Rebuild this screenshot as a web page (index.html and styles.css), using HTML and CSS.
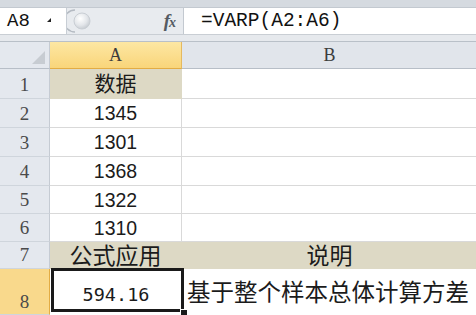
FILE: index.html
```html
<!DOCTYPE html>
<html lang="zh-CN">
<head>
    <meta charset="UTF-8">
    <title>VARP</title>
    <link rel="stylesheet" href="styles.css">
</head>
<body>
    <div class="chrome"></div>

    <div class="formula-bar">
        <div class="name-box">
            <span class="ref">A8</span>
            <span class="drop"></span>
        </div>
        <div class="bar-tools">
            <svg class="knob" width="26" height="26" viewBox="0 0 26 26">
                <defs>
                    <radialGradient id="kg" cx="0.4" cy="0.35" r="0.7">
                        <stop offset="0" stop-color="#ffffff"/>
                        <stop offset="0.6" stop-color="#e3e6ea"/>
                        <stop offset="1" stop-color="#c3c8ce"/>
                    </radialGradient>
                </defs>
                <path d="M8 2 A11 11 0 0 0 8 24" fill="none" stroke="#b4bac2" stroke-width="1.5"/>
                <circle cx="15" cy="13" r="8" fill="url(#kg)" stroke="#c9ced4"/>
            </svg>
            <span class="fx">f<small>x</small></span>
        </div>
        <div class="formula">=VARP(A2:A6)</div>
    </div>

    <div class="gap"></div>

    <div class="sheet">
        <div class="corner"><span></span></div>
        <div class="col-head active">A</div>
        <div class="col-head">B</div>

        <div class="row-head">1</div>
        <div class="cell tan">数据</div>
        <div class="cell"></div>

        <div class="row-head">2</div>
        <div class="cell">1345</div>
        <div class="cell"></div>

        <div class="row-head">3</div>
        <div class="cell">1301</div>
        <div class="cell"></div>

        <div class="row-head">4</div>
        <div class="cell">1368</div>
        <div class="cell"></div>

        <div class="row-head">5</div>
        <div class="cell">1322</div>
        <div class="cell"></div>

        <div class="row-head">6</div>
        <div class="cell">1310</div>
        <div class="cell"></div>

        <div class="row-head">7</div>
        <div class="cell tan big">公式应用</div>
        <div class="cell tan big">说明</div>

        <div class="row-head active tall">8</div>
        <div class="cell selected">594.16</div>
        <div class="cell note">基于整个样本总体计算方差</div>
    </div>
</body>
</html>
```

FILE: styles.css
```css
body {
    margin: 0;
    background: #e4e8ed;
    font-family: "Liberation Sans", "Noto Sans CJK SC", sans-serif;
    width: 476px;
    height: 315px;
    overflow: hidden;
}
.chrome {
    height: 7px;
    background: #d5dae0;
    border-bottom: 1px solid #c3c9d0;
}
.formula-bar {
    display: flex;
    height: 26px;
    background: #e8ebef;
}
.name-box {
    width: 66px;
    background: #fff;
    border-right: 1px solid #c8ced5;
    display: flex;
    align-items: center;
    position: relative;
}
.ref {
    font-family: "Liberation Mono", monospace;
    font-size: 19px;
    margin-left: 7px;
    color: #111;
}
.drop {
    width: 0;
    height: 0;
    border-left: 4px solid transparent;
    border-bottom: 4px solid #222;
    margin-left: 17px;
    margin-top: -2px;
}
.bar-tools {
    width: 116px;
    display: flex;
    align-items: center;
    border-right: 1px solid #c3c9d0;
}
.fx {
    margin-left: auto;
    margin-right: 8px;
    font-family: "Liberation Serif", serif;
    font-style: italic;
    font-weight: bold;
    font-size: 19px;
    color: #555b63;
    letter-spacing: -1px;
}
.fx small {
    font-size: 14px;
}
.formula {
    flex: 1;
    background: #fff;
    font-family: "Liberation Mono", monospace;
    font-size: 19.5px;
    line-height: 26px;
    padding-left: 17px;
    color: #111;
}
.gap {
    height: 8px;
    border-top: 1px solid #c9ced4;
    border-bottom: 1px solid #b9c0c8;
    background: #e6e9ed;
    box-sizing: border-box;
}
.sheet {
    display: grid;
    grid-template-columns: 50px 132px 296px;
    grid-template-rows: 27px 30px 29px 29px 29px 28px 28px 27px 46px;
    background: #fff;
}
.corner {
    background: #e4e8ee;
    border-right: 1px solid #c5cbd3;
    border-bottom: 1px solid #b7bec7;
    position: relative;
}
.corner span {
    position: absolute;
    right: 4px;
    bottom: 4px;
    width: 0;
    height: 0;
    border-left: 13px solid transparent;
    border-bottom: 13px solid #c7ccd2;
}
.col-head {
    background: #e1e5eb;
    border-right: 1px solid #c5cbd3;
    border-bottom: 1px solid #b7bec7;
    font-family: "Liberation Serif", serif;
    font-size: 18px;
    color: #3c3c3c;
    text-align: center;
    line-height: 27px;
}
.col-head.active {
    background: linear-gradient(#fde7a3, #f9d57a);
    border-right-color: #e5b95f;
    border-bottom: 1px solid #e3ac43;
}
.row-head {
    background: #e4e8ee;
    border-right: 1px solid #c5cbd3;
    border-bottom: 1px solid #cfd5dc;
    font-family: "Liberation Serif", serif;
    font-size: 19px;
    color: #4a4a4a;
    text-align: center;
    display: flex;
    align-items: flex-end;
    justify-content: center;
    padding-bottom: 2px;
    box-sizing: border-box;
}
.row-head.active {
    background: #f9d98c;
    border-right-color: #e3ac43;
}
.row-head.tall {
    padding-bottom: 1px;
}
.cell {
    border-right: 1px solid #d9d9d9;
    border-bottom: 1px solid #d9d9d9;
    font-size: 19.5px;
    color: #1b1b1b;
    text-align: center;
    line-height: 29px;
    overflow: hidden;
    white-space: nowrap;
}
.tan {
    background: #ddd9c5;
    border-right-color: #ddd9c5;
    border-bottom-color: #ddd9c5;
    font-size: 21px;
}
.big {
    font-size: 23px;
    line-height: 28px;
}
.selected {
    position: relative;
    overflow: visible;
    font-family: "DejaVu Sans Mono", monospace;
    font-size: 18.5px;
    line-height: 52px;
    border: none;
}
.selected::after {
    content: "";
    position: absolute;
    top: -1px;
    left: 1px;
    width: 133px;
    height: 44px;
    border: 3px solid #1a1a1a;
    box-sizing: border-box;
}
.selected::before {
    content: "";
    position: absolute;
    left: 130px;
    top: 40px;
    width: 6px;
    height: 6px;
    background: #1a1a1a;
    border: 1px solid #fff;
    z-index: 1;
}
.note {
    text-align: left;
    padding-left: 5px;
    font-size: 23.5px;
    line-height: 48px;
    border: none;
}
```
